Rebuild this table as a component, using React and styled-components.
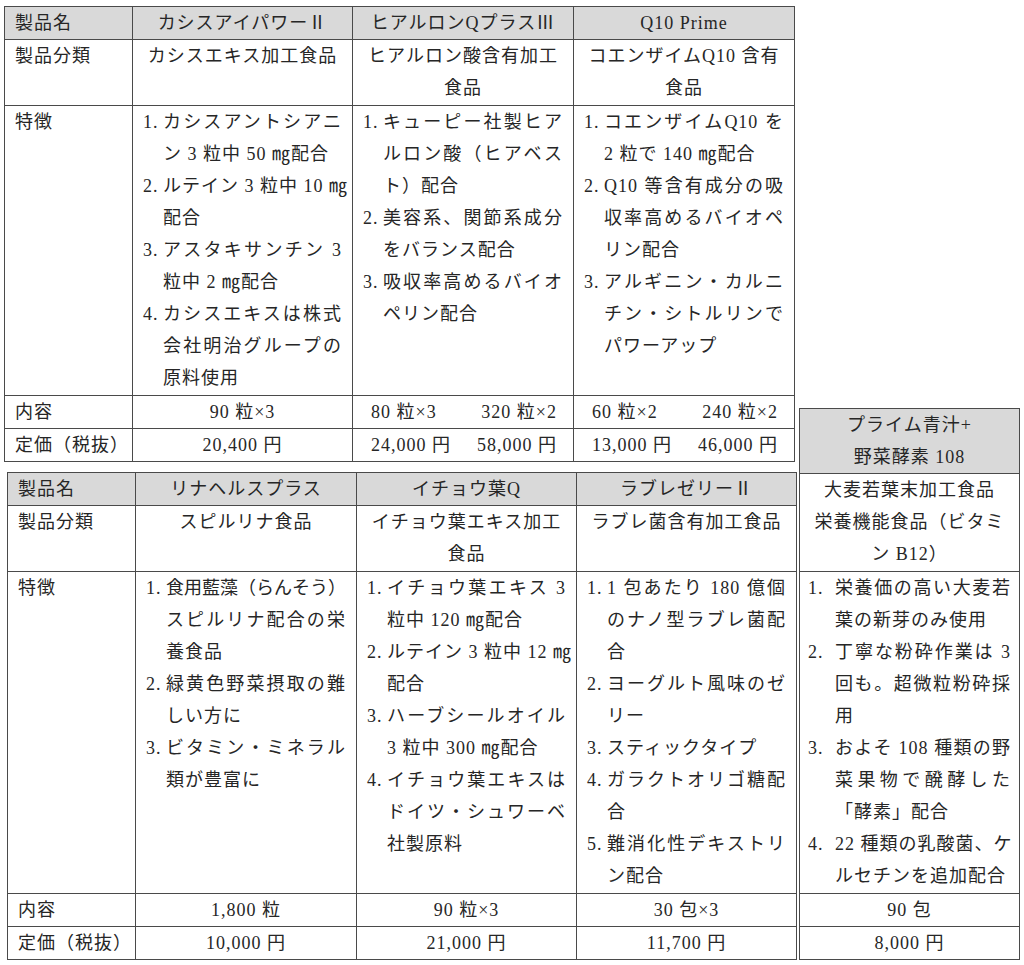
import React from 'react';
import styled, { createGlobalStyle } from 'styled-components';

const GlobalStyle = createGlobalStyle`
  body {
    margin: 0;
    background: #fff;
    color: #262626;
    font-family: 'Liberation Serif', 'Noto Sans CJK JP', serif;
  }
`;

const Page = styled.div`
  display: grid;
  grid-template-columns: 795px 220px;
  grid-template-rows: auto auto;
  padding: 6px 0 0 4px;
`;

const Slot = styled.div`
  grid-column: ${({ $col }) => $col};
  grid-row: ${({ $row }) => $row};
  align-self: ${({ $align }) => $align || 'start'};
  margin: ${({ $margin }) => $margin || '0'};
`;

const Sheet = styled.table`
  border-collapse: collapse;
  table-layout: fixed;
  font-size: 18px;
  line-height: 32px;
  letter-spacing: 1px;
`;

const Col = styled.col`
  width: ${({ $w }) => $w}px;
`;

const Cell = styled.td`
  border: 1px solid #4a4a4a;
  padding: 0 ${({ $pad }) => ($pad != null ? $pad : 10)}px
    ${({ $tall }) => ($tall ? 1 : 0)}px;
  vertical-align: top;
  text-align: ${({ $left }) => ($left ? 'left' : 'center')};
  background: ${({ $head }) => ($head ? '#d9d9d9' : '#fff')};
`;

const Line = styled.div`
  white-space: nowrap;
  text-align: ${({ $fill }) => ($fill ? 'justify' : 'inherit')};
  text-align-last: ${({ $fill }) => ($fill ? 'justify' : 'auto')};
  letter-spacing: ${({ $tight }) => ($tight ? '0' : 'inherit')};
`;

const Item = styled.div`
  display: grid;
  grid-template-columns: ${({ $num }) => $num}px 1fr;
  text-align: left;
`;

const Pair = styled.div`
  display: flex;
  justify-content: space-between;
  padding: 0 6px 0 8px;
`;

const top = {
  cols: [128, 220, 221, 221],
  labels: true,
  num: 20,
  names: [['カシスアイパワーⅡ'], ['ヒアルロンQプラスⅢ'], ['Q10 Prime']],
  kinds: [
    ['カシスエキス加工食品'],
    ['ヒアルロン酸含有加工', '食品'],
    ['コエンザイムQ10 含有', '食品'],
  ],
  features: [
    [
      ['カシスアントシアニ', 'ン 3 粒中 50 ㎎配合'],
      ['ルテイン 3 粒中 10 ㎎', '配合'],
      ['アスタキサンチン 3', '粒中 2 ㎎配合'],
      ['カシスエキスは株式', '会社明治グループの', '原料使用'],
    ],
    [
      ['キューピー社製ヒア', 'ルロン酸（ヒアベス', 'ト）配合'],
      ['美容系、関節系成分', 'をバランス配合'],
      ['吸収率高めるバイオ', 'ペリン配合'],
    ],
    [
      ['コエンザイムQ10 を', '2 粒で 140 ㎎配合'],
      ['Q10 等含有成分の吸', '収率高めるバイオペ', 'リン配合'],
      ['アルギニン・カルニ', 'チン・シトルリンで', 'パワーアップ'],
    ],
  ],
  amounts: [['90 粒×3'], ['80 粒×3', '320 粒×2'], ['60 粒×2', '240 粒×2']],
  prices: [['20,400 円'], ['24,000 円', '58,000 円'], ['13,000 円', '46,000 円']],
};

const bottom = {
  cols: [128, 221, 220, 220],
  labels: true,
  num: 20,
  names: [['リナヘルスプラス'], ['イチョウ葉Q'], ['ラブレゼリーⅡ']],
  kinds: [['スピルリナ食品'], ['イチョウ葉エキス加工', '食品'], ['ラブレ菌含有加工食品']],
  features: [
    [
      ['食用藍藻（らんそう）', 'スピルリナ配合の栄', '養食品'],
      ['緑黄色野菜摂取の難', 'しい方に'],
      ['ビタミン・ミネラル', '類が豊富に'],
    ],
    [
      ['イチョウ葉エキス 3', '粒中 120 ㎎配合'],
      ['ルテイン 3 粒中 12 ㎎', '配合'],
      ['ハーブシールオイル', '3 粒中 300 ㎎配合'],
      ['イチョウ葉エキスは', 'ドイツ・シュワーベ', '社製原料'],
    ],
    [
      ['1 包あたり 180 億個', 'のナノ型ラブレ菌配', '合'],
      ['ヨーグルト風味のゼ', 'リー'],
      ['スティックタイプ'],
      ['ガラクトオリゴ糖配', '合'],
      ['難消化性デキストリ', 'ン配合'],
    ],
  ],
  amounts: [['1,800 粒'], ['90 粒×3'], ['30 包×3']],
  prices: [['10,000 円'], ['21,000 円'], ['11,700 円']],
};

const side = {
  cols: [220],
  labels: false,
  num: 27,
  pad: 8,
  names: [['プライム青汁+', '野菜酵素 108']],
  kinds: [['大麦若葉末加工食品', '栄養機能食品（ビタミ', 'ン B12）']],
  features: [
    [
      ['栄養価の高い大麦若', '葉の新芽のみ使用'],
      ['丁寧な粉砕作業は 3', '回も。超微粒粉砕採', '用'],
      ['およそ 108 種類の野', '菜果物で醗酵した', '「酵素」配合'],
      ['22 種類の乳酸菌、ケ', 'ルセチンを追加配合'],
    ],
  ],
  amounts: [['90 包']],
  prices: [['8,000 円']],
};

const TIGHT = ['食用藍藻（らんそう）'];

const Lines = ({ lines }) =>
  lines.map((text, i) => <Line key={i}>{text}</Line>);

const Features = ({ items, num }) =>
  items.map((lines, i) => (
    <Item key={i} $num={num}>
      <span>{i + 1}.</span>
      <div>
        {lines.map((text, j) => (
          <Line key={j} $fill={j < lines.length - 1} $tight={TIGHT.includes(text)}>
            {text}
          </Line>
        ))}
      </div>
    </Item>
  ));

const Values = ({ values }) =>
  values.length > 1 ? (
    <Pair>
      {values.map(v => (
        <span key={v}>{v}</span>
      ))}
    </Pair>
  ) : (
    values[0]
  );

const ProductTable = ({ data }) => {
  const label = (text, opts = {}) =>
    data.labels ? (
      <Cell $left {...opts}>
        {text}
      </Cell>
    ) : null;
  const width = data.cols.reduce((a, b) => a + b, 0);
  return (
    <Sheet style={{ width }}>
      <colgroup>
        {data.cols.map((w, i) => (
          <Col key={i} $w={w} />
        ))}
      </colgroup>
      <tbody>
        <tr>
          {label('製品名', { $head: true })}
          {data.names.map((n, i) => (
            <Cell key={i} $head>
              <Lines lines={n} />
            </Cell>
          ))}
        </tr>
        <tr>
          {label('製品分類', { $tall: true })}
          {data.kinds.map((k, i) => (
            <Cell key={i} $tall>
              <Lines lines={k} />
            </Cell>
          ))}
        </tr>
        <tr>
          {label('特徴', { $tall: true })}
          {data.features.map((f, i) => (
            <Cell key={i} $tall $pad={data.pad}>
              <Features items={f} num={data.num} />
            </Cell>
          ))}
        </tr>
        <tr>
          {label('内容')}
          {data.amounts.map((v, i) => (
            <Cell key={i}>
              <Values values={v} />
            </Cell>
          ))}
        </tr>
        <tr>
          {label('定価（税抜）')}
          {data.prices.map((v, i) => (
            <Cell key={i}>
              <Values values={v} />
            </Cell>
          ))}
        </tr>
      </tbody>
    </Sheet>
  );
};

export default function App() {
  return (
    <>
      <GlobalStyle />
      <Page>
        <Slot $col={1} $row={1}>
          <ProductTable data={top} />
        </Slot>
        <Slot $col={1} $row={2} $margin="10px 0 0 3px">
          <ProductTable data={bottom} />
        </Slot>
        <Slot $col={2} $row="1 / 3" $align="end">
          <ProductTable data={side} />
        </Slot>
      </Page>
    </>
  );
}
